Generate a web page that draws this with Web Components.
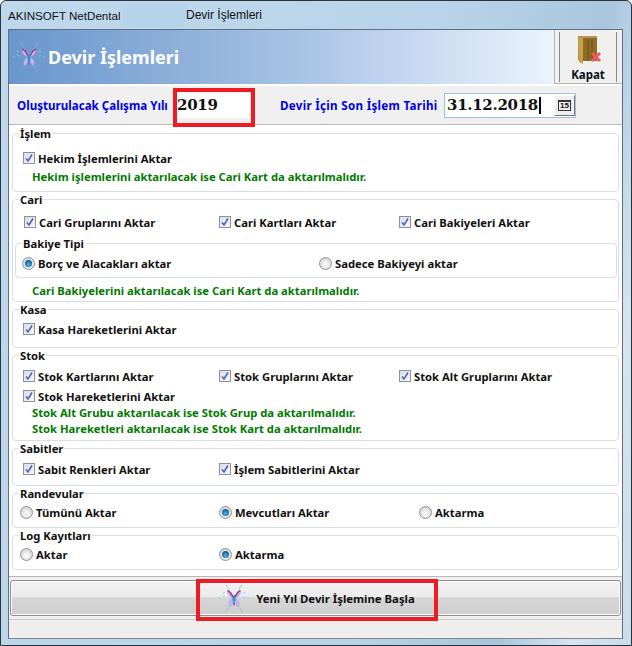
<!DOCTYPE html>
<html><head><meta charset="utf-8">
<style>
html,body{margin:0;padding:0;background:#fff}
body{width:632px;height:646px;overflow:hidden;font:bold 11.25px "Noto Sans","DejaVu Sans",sans-serif;color:#111}
</style></head><body>
<template id="butterfly"><svg viewBox="0 0 32 34" fill="none">
<path d="M15 15L7 2M17 15L25 2" stroke="#72c4e6" stroke-width="1" stroke-dasharray="2 1"/>
<path d="M15 20L7 32M17 20L25 32" stroke="#6fb6dc" stroke-width="1" stroke-dasharray="2 1"/>
<path d="M0 17h2M4 15l2 1M32 17h-2M28 15l-2 1M26 11l2 1M6 11l-2 1" stroke="#7fcbe8" stroke-width="1"/>
<path d="M16 15C13 11 10 9 9 10c0 3 2 6 6 7-3 1-5 5-4 8 2 2 4-3 5-7 1 4 3 9 5 7 1-3-1-7-4-8 4-1 6-4 6-7-1-1-4 1-7 5z" fill="#c8b4ee" stroke="#a98bde" stroke-width=".5"/>
<path d="M9 9l3 2 3 5M23 9l-3 2-3 5" stroke="#b4207e" stroke-width="1.300"/>
<rect x="14.500" y="14" width="3" height="7" rx="1.500" fill="#1f9ccc"/>
<rect x="15" y="21" width="2" height="4" fill="#6f7fd0"/>
</svg></template>

<template id="t-window"><style>
:host{display:flex;flex-direction:column;box-sizing:border-box;width:632px;height:646px;padding:0 8px 6px 7px;border:1px solid #2d3338;border-radius:6px 6px 0 0;background:linear-gradient(100deg,#bfd7ec 0%,#b9d4ea 60%,#a9c6de 82%,#d5e5f2 92%,#c8dded 100%)}
.title{flex:none;height:28px;display:flex;align-items:center;font:12px "Liberation Sans",sans-serif;color:#111;white-space:nowrap}
.title span:first-child{width:115px;font-size:11.6px}
.blur{width:63px;height:23px;background:#b5d3ea}
.body{flex:1;display:flex;flex-direction:column;border:1px solid #60707c;border-bottom-color:#7a8792;background:#f0f0f0;min-height:0}
</style><div class="title"><span>AKINSOFT NetDental</span><span class="blur"></span><span>Devir İşlemleri</span></div><div class="body"><slot></slot></div></template>

<template id="t-header"><style>
:host{display:flex;flex:none;height:56px;box-sizing:border-box;background:linear-gradient(90deg,#6896cc 0%,#a5c0e3 45%,#e9f2fe 88%,#eef5ff 100%);border-bottom:2px solid #fff;align-items:center}
.ic{margin-left:4px;display:flex;width:32px;height:34px}
.ic svg{width:32px;height:34px}
h1{margin:0 0 0 3px;font:bold 18px "Noto Sans","DejaVu Sans",sans-serif;color:#fff;flex:1}
.k{width:68px;align-self:stretch;background:#f0f0f0;border-left:1px solid #b4b4b4;border-bottom:1px solid #b4b4b4;box-sizing:border-box;padding:2px 5px 0 4px;display:flex}
.k div{flex:1;border-left:1px solid #8a8a8a;border-right:1px solid #8a8a8a;display:flex;flex-direction:column;align-items:center;font:bold 11.5px/14px "Noto Sans","DejaVu Sans",sans-serif;color:#0a1020;margin-bottom:1px}
svg.door{margin:4px 0 3px 4px}
</style><span class="ic" id="ic"></span><h1>Devir İşlemleri</h1><div class="k"><div><svg class="door" width="26" height="29" viewBox="0 0 26 29"><path d="M1 1h19v23H1z" fill="#a8853a"/><path d="M1 0l5 2v26l-4-2z" fill="#c9a04a"/><path d="M6 2h14v23H6z" fill="#8f6c26"/><path d="M11 3v21M15 3v21" stroke="#6e5117"/><path d="M1 0h19v2H1z" fill="#b8954a"/><path d="M15 17l8 8M23 17l-8 8" stroke="#ee5a62" stroke-width="3"/></svg><span>Kapat</span></div></div></template>

<template id="t-params"><style>
:host{display:flex;flex:none;height:38px;align-items:center;box-sizing:border-box;padding:0 0 0 8px;color:#0000e6;font:bold 11.6px "Noto Sans","DejaVu Sans",sans-serif;position:relative}
</style><slot></slot></template>

<template id="t-field"><style>
:host{display:flex;box-sizing:border-box;height:25px;align-items:center;background:#fff;position:relative;font:bold 15px "DejaVu Serif","Liberation Serif",serif;letter-spacing:-.3px;color:#111}
:host([bordered]){border:1px solid #9cc0dd}
.red{position:absolute;inset:-5px -6px -9px -4px;border:4px solid #ed1c24;pointer-events:none}
</style><slot></slot><span class="red" id="r" hidden></span></template>

<template id="t-panel"><style>
:host{display:flex;flex-direction:column;flex:none;height:453px;box-sizing:border-box;background:#fff;border-top:1px solid #b8b8b8;padding:8px 3px 0;gap:7px;border-bottom:1px solid #b8b8b8}
</style><slot></slot></template>

<template id="t-group"><style>
:host{display:block;box-sizing:border-box;border:1px solid #d5dfe5;border-radius:4px;position:relative;background:#fff;color:#111}
.legend{position:absolute;left:6px;top:-7px;background:#fff;padding:0 1px;font:bold 11.25px/13px "Noto Sans","DejaVu Sans",sans-serif}
.c{display:flex;flex-direction:column}
</style><div class="legend" id="l"></div><div class="c"><slot></slot></div></template>

<template id="t-row"><style>
:host{display:grid;align-items:center;font:bold 11.25px "Noto Sans","DejaVu Sans",sans-serif;color:#111}
</style><slot></slot></template>

<template id="t-check"><style>
:host{display:inline-flex;align-items:center;gap:3px;white-space:nowrap}
.b{width:12px;height:12px;box-sizing:border-box;border:1px solid #8e9196;background:linear-gradient(135deg,#d8dee8,#f6f8fb);display:inline-flex;flex:none}
.b svg{display:block}
.r{width:13px;height:13px;box-sizing:border-box;border-radius:50%;border:1px solid #8e9196;background:radial-gradient(circle at 50% 60%,#fff,#d4d4d4 80%);display:inline-flex;align-items:center;justify-content:center;flex:none}
.r i{width:7px;height:7px;border-radius:50%;background:radial-gradient(circle at 50% 65%,#4bb8ea,#0e5d95 70%)}
</style><span id="m"></span><slot></slot></template>

<template id="t-note"><style>
:host{display:block;color:#007a00;font:bold 11.25px "Noto Sans","DejaVu Sans",sans-serif;white-space:nowrap}
</style><slot></slot></template>

<template id="t-action"><style>
:host{display:flex;flex:none;box-sizing:border-box;margin:3px 1px 0;height:36px;border:1px solid #8d8d8d;border-radius:3px;box-shadow:inset 0 0 0 1px #fff;background:linear-gradient(#f3f3f3 0,#ececec 45%,#d5d5d5 50%,#cfcfcf 100%);align-items:center;justify-content:center;font:bold 11.35px "Noto Sans","DejaVu Sans",sans-serif;color:#111;position:relative}
.in{display:flex;align-items:center;gap:7px;margin-left:3px}
#ic,#ic svg{display:block;width:30px;height:32px}
.red{position:absolute;left:185px;top:-2px;width:242px;height:42px;box-sizing:border-box;border:4px solid #ed1c24}
</style><div class="in"><span id="ic"></span><slot></slot></div><span class="red"></span></template>

<template id="t-status"><style>
:host{display:block;flex:1;margin-top:3px;background:#f0eded;border-top:1px solid #c9c9c9}
</style></template>

<script>
const bf=()=>document.getElementById('butterfly').content.cloneNode(true);
function def(name,tid,init){customElements.define(name,class extends HTMLElement{
 constructor(){super();const s=this.attachShadow({mode:'open'});s.appendChild(document.getElementById(tid).content.cloneNode(true));}
 connectedCallback(){if(init)init.call(this,this.shadowRoot);}
});}
def('x-window','t-window');
def('x-header','t-header',s=>{s.getElementById('ic').appendChild(bf());});
def('x-params','t-params');
def('x-field','t-field',function(s){if(this.hasAttribute('red'))s.getElementById('r').hidden=false;});
def('x-panel','t-panel');
def('x-group','t-group',function(s){s.getElementById('l').textContent=this.getAttribute('label');});
def('x-row','t-row',function(){this.style.gridTemplateColumns=this.getAttribute('cols');this.style.height=(this.getAttribute('h')||'20')+'px';this.style.paddingLeft=(this.getAttribute('pl')||'0')+'px';});
def('x-check','t-check',function(s){
 const m=s.getElementById('m');
 const t=this.getAttribute('type')||'check';
 if(t==='check'){m.className='b';m.innerHTML='<svg width="10" height="10" viewBox="0 0 10 10"><path d="M2 5.500l2 2.500 4-6.500" fill="none" stroke="#4a60b4" stroke-width="1.500"/></svg>';}
 else{m.className='r';if(t==='radio-on')m.innerHTML='<i></i>';}
});
def('x-note','t-note');
def('x-action','t-action',s=>{s.getElementById('ic').appendChild(bf());});
def('x-status','t-status');
</script>

<x-window>
 <x-header></x-header>
 <x-params>
  <span style="width:160px;white-space:nowrap">Oluşturulacak Çalışma Yılı</span>
  <x-field red style="width:72px">2019</x-field>
  <span style="margin-left:31px;width:164px;white-space:nowrap;letter-spacing:.3px">Devir İçin Son İşlem Tarihi</span>
  <x-field bordered style="width:132px;padding-left:2px">31.12.2018<span style="width:2px;height:17px;background:#000;margin-left:1px"></span>
   <span style="margin-left:auto;width:21px;height:21px;box-sizing:border-box;border:1px solid;border-color:#fff #777 #777 #fff;background:#eee;display:flex;align-items:center;justify-content:center;font:bold 8px 'Liberation Sans',sans-serif;letter-spacing:0;color:#111"><span style="border:1px solid #333;border-top-width:2px;line-height:8px;padding:0 1px">15</span></span>
  </x-field>
 </x-params>
 <x-panel>
  <x-group label="İşlem" style="height:59px">
   <x-row cols="1fr" h="20" pl="10" style="margin-top:14px"><x-check>Hekim İşlemlerini Aktar</x-check></x-row>
   <x-row cols="1fr" h="16" pl="19"><x-note>Hekim işlemlerini aktarılacak ise Cari Kart da aktarılmalıdır.</x-note></x-row>
  </x-group>
  <x-group label="Cari" style="height:103px">
   <x-row cols="195px 180px 1fr" h="20" pl="11" style="margin-top:12px"><x-check>Cari Gruplarını Aktar</x-check><x-check>Cari Kartları Aktar</x-check><x-check>Cari Bakiyeleri Aktar</x-check></x-row>
   <x-group label="Bakiye Tipi" style="height:35px;margin:11px 1px 0 2px">
    <x-row cols="297px 1fr" h="20" pl="6" style="margin-top:9px"><x-check type="radio-on">Borç ve Alacakları aktar</x-check><x-check type="radio">Sadece Bakiyeyi aktar</x-check></x-row>
   </x-group>
   <x-row cols="1fr" h="20" pl="19" style="margin-top:2px"><x-note>Cari Bakiyelerini aktarılacak ise Cari Kart da aktarılmalıdır.</x-note></x-row>
  </x-group>
  <x-group label="Kasa" style="height:39px">
   <x-row cols="1fr" h="20" pl="10" style="margin-top:9px"><x-check>Kasa Hareketlerini Aktar</x-check></x-row>
  </x-group>
  <x-group label="Stok" style="height:86px">
   <x-row cols="196px 180px 1fr" h="20" pl="10" style="margin-top:10px"><x-check>Stok Kartlarını Aktar</x-check><x-check>Stok Gruplarını Aktar</x-check><x-check>Stok Alt Gruplarını Aktar</x-check></x-row>
   <x-row cols="1fr" h="20" pl="10"><x-check>Stok Hareketlerini Aktar</x-check></x-row>
   <x-row cols="1fr" h="16" pl="19" style="margin-top:-2px"><x-note>Stok Alt Grubu aktarılacak ise Stok Grup da aktarılmalıdır.</x-note></x-row>
   <x-row cols="1fr" h="16" pl="19"><x-note>Stok Hareketleri aktarılacak ise Stok Kart da aktarılmalıdır.</x-note></x-row>
  </x-group>
  <x-group label="Sabitler" style="height:38px">
   <x-row cols="196px 1fr" h="20" pl="10" style="margin-top:10px"><x-check>Sabit Renkleri Aktar</x-check><x-check>İşlem Sabitlerini Aktar</x-check></x-row>
  </x-group>
  <x-group label="Randevular" style="height:35px">
   <x-row cols="199px 200px 1fr" h="20" pl="7" style="margin-top:8px"><x-check type="radio">Tümünü Aktar</x-check><x-check type="radio-on">Mevcutları Aktar</x-check><x-check type="radio">Aktarma</x-check></x-row>
  </x-group>
  <x-group label="Log Kayıtları" style="height:35px">
   <x-row cols="199px 1fr" h="20" pl="7" style="margin-top:8px"><x-check type="radio">Aktar</x-check><x-check type="radio-on">Aktarma</x-check></x-row>
  </x-group>
 </x-panel>
 <x-action>Yeni Yıl Devir İşlemine Başla</x-action>
 <x-status></x-status>
</x-window>
</body></html>
